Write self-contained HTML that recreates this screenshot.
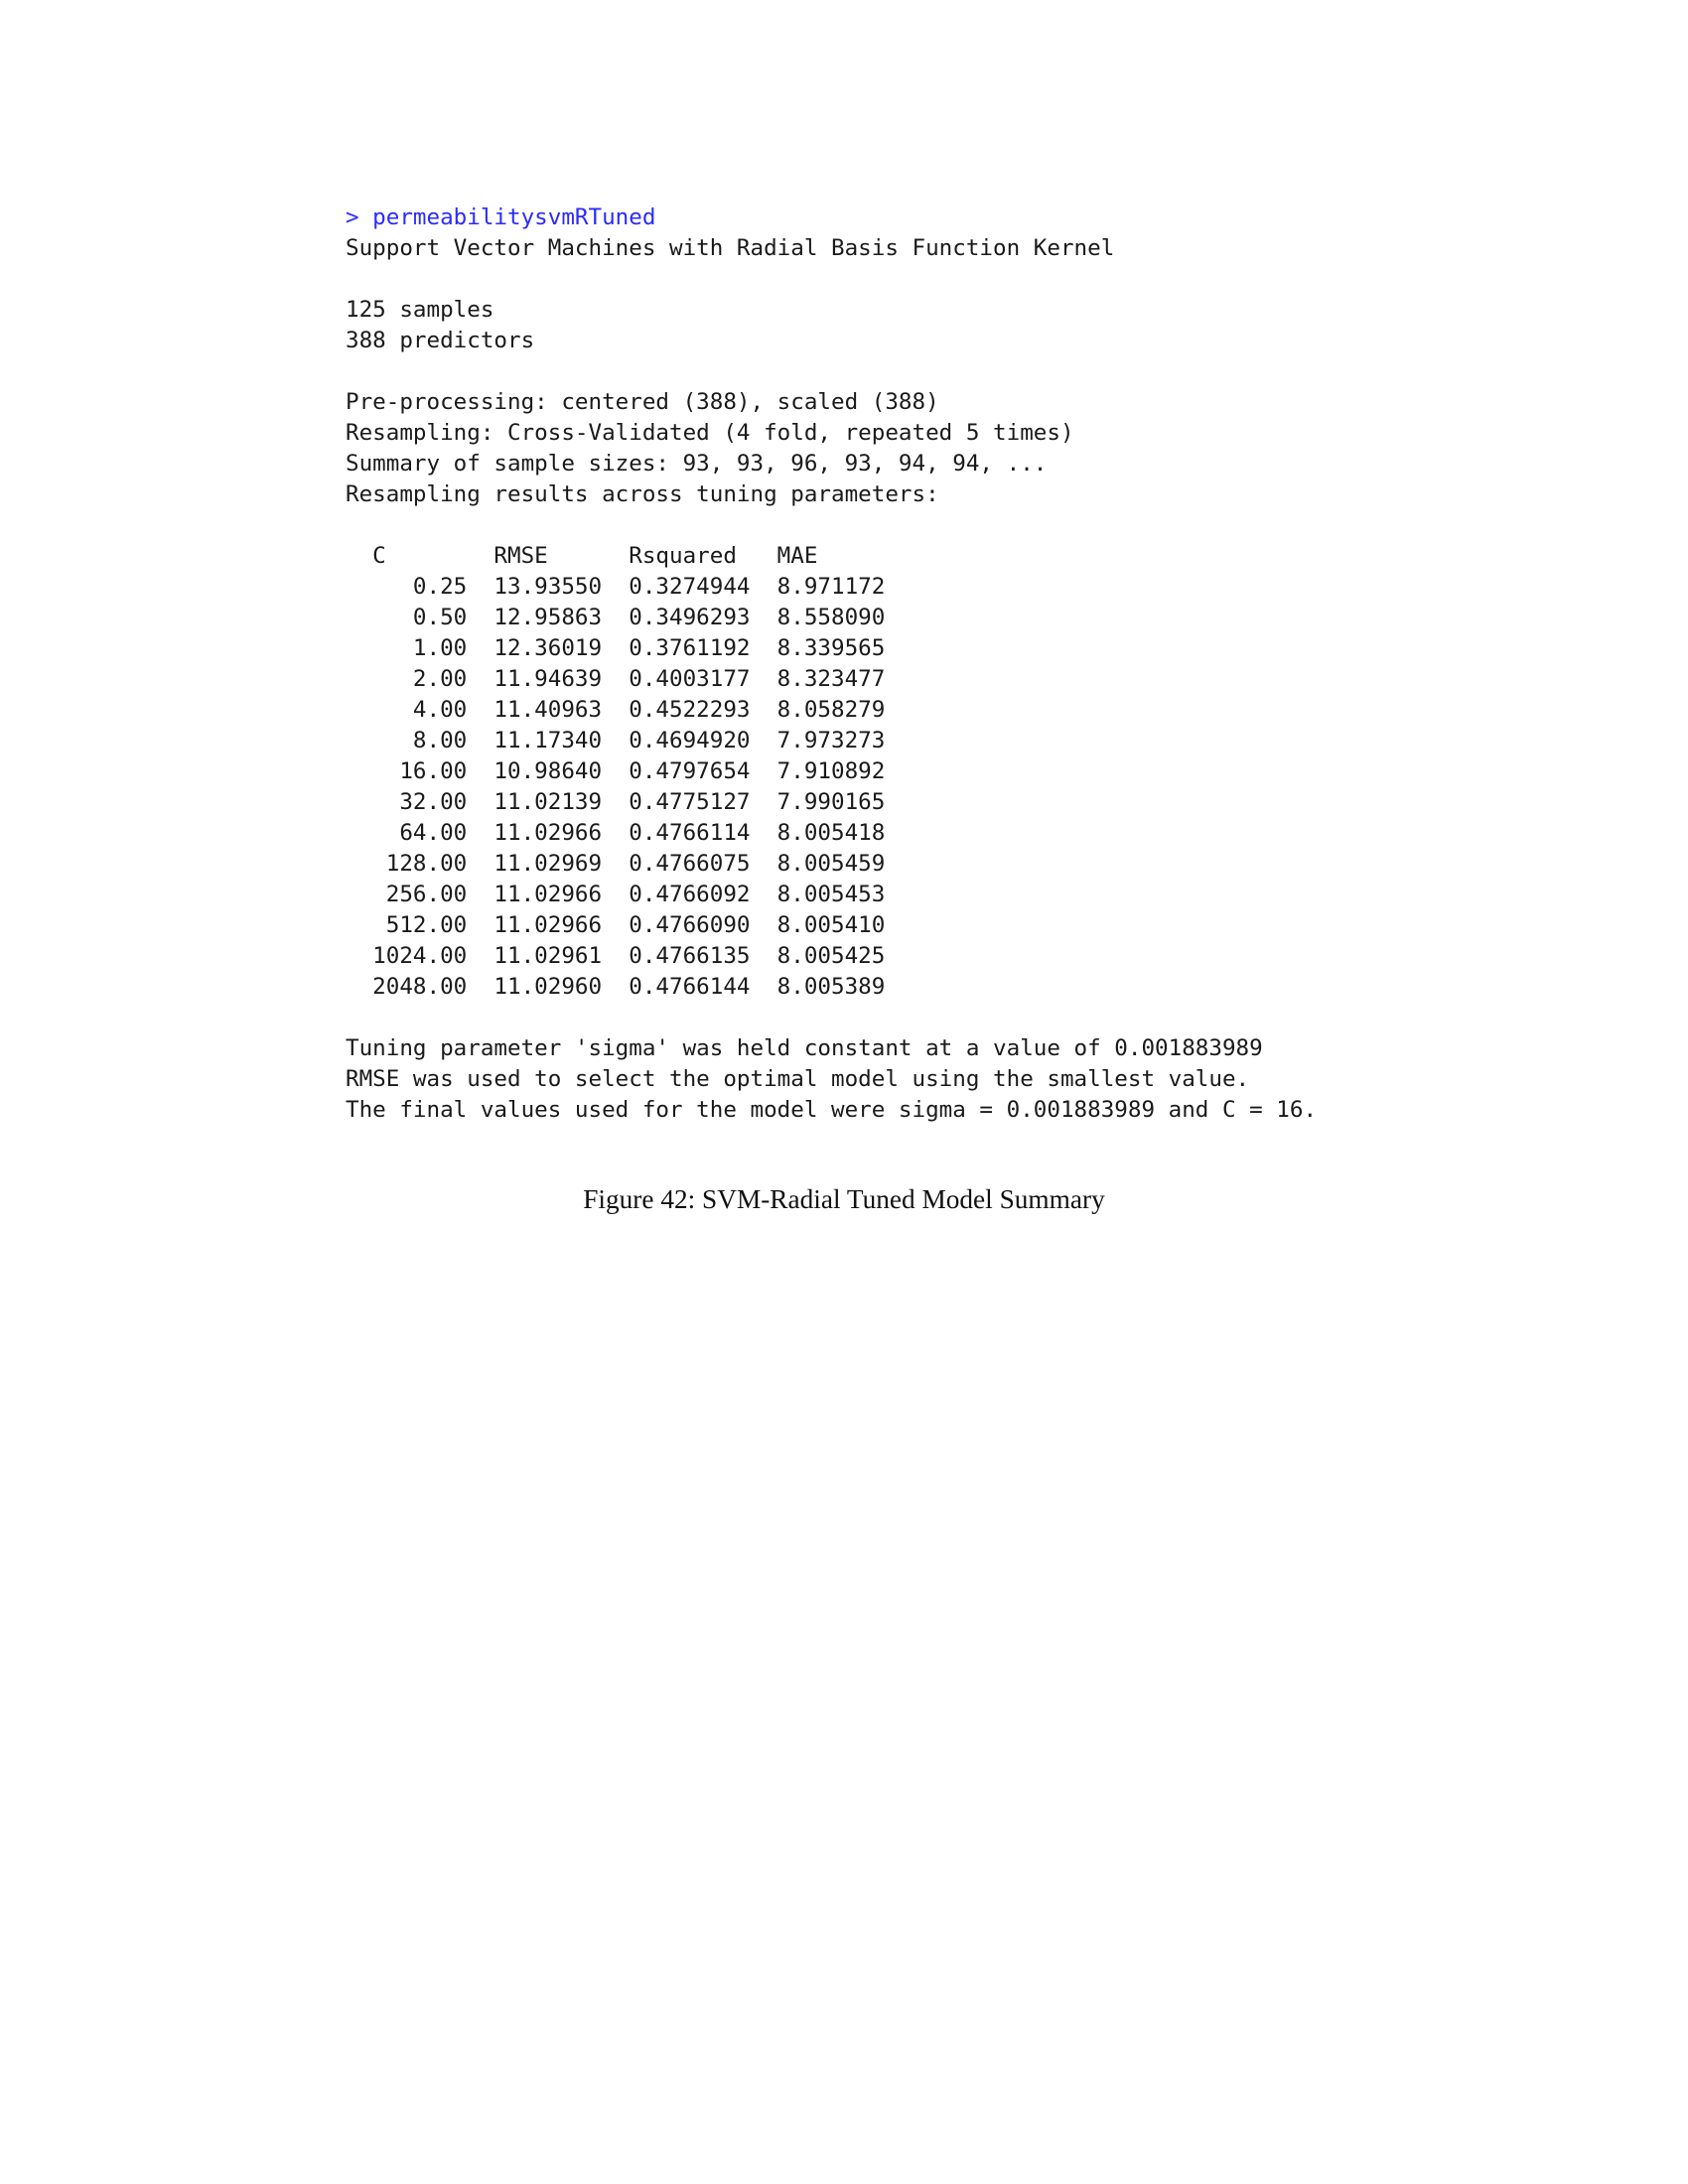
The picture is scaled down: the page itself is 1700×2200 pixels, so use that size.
<!DOCTYPE html>
<html><head><meta charset="utf-8"><style>
body{margin:0;background:#fff;width:1700px;height:2200px;position:relative;overflow:hidden}
pre{position:absolute;left:348px;top:204px;margin:0;font-family:"DejaVu Sans Mono","Liberation Mono",monospace;font-size:22.57px;line-height:31px;color:#1a1a1a}
.b{color:#2a2aff}
.cap{position:absolute;left:0;width:1700px;top:1193px;text-align:center;font-family:"Liberation Serif",serif;font-size:27.3px;color:#111}
</style></head><body>
<pre><span class="b">&gt; permeabilitysvmRTuned</span>
Support Vector Machines with Radial Basis Function Kernel

125 samples
388 predictors

Pre-processing: centered (388), scaled (388)
Resampling: Cross-Validated (4 fold, repeated 5 times)
Summary of sample sizes: 93, 93, 96, 93, 94, 94, ...
Resampling results across tuning parameters:

  C        RMSE      Rsquared   MAE
     0.25  13.93550  0.3274944  8.971172
     0.50  12.95863  0.3496293  8.558090
     1.00  12.36019  0.3761192  8.339565
     2.00  11.94639  0.4003177  8.323477
     4.00  11.40963  0.4522293  8.058279
     8.00  11.17340  0.4694920  7.973273
    16.00  10.98640  0.4797654  7.910892
    32.00  11.02139  0.4775127  7.990165
    64.00  11.02966  0.4766114  8.005418
   128.00  11.02969  0.4766075  8.005459
   256.00  11.02966  0.4766092  8.005453
   512.00  11.02966  0.4766090  8.005410
  1024.00  11.02961  0.4766135  8.005425
  2048.00  11.02960  0.4766144  8.005389

Tuning parameter 'sigma' was held constant at a value of 0.001883989
RMSE was used to select the optimal model using the smallest value.
The final values used for the model were sigma = 0.001883989 and C = 16.</pre>
<div class="cap">Figure 42: SVM-Radial Tuned Model Summary</div>
</body></html>
